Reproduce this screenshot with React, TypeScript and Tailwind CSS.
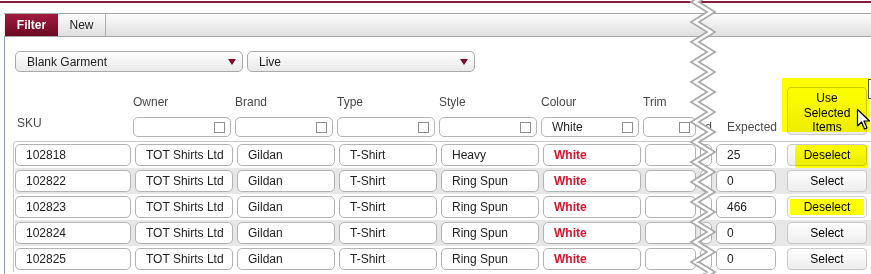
import React from "react"

const rows = [
  { sku: "102818", style: "Heavy", expected: "25", mode: "marked" },
  { sku: "102822", style: "Ring Spun", expected: "0", mode: "none" },
  { sku: "102823", style: "Ring Spun", expected: "466", mode: "filled" },
  { sku: "102824", style: "Ring Spun", expected: "0", mode: "none" },
  { sku: "102825", style: "Ring Spun", expected: "0", mode: "none" },
]

function Arrow() {
  return (
    <svg width="8" height="6" viewBox="0 0 8 6" className="shrink-0">
      <polygon points="0,0 8,0 4,6" fill="#7a0d28" />
    </svg>
  )
}

function FakeSelect({ label }: { label: string }) {
  return (
    <div className="w-[228px] h-[21px] flex items-center justify-between pl-[11px] pr-[6px] border border-[#a9a9a9] rounded-[5px] bg-gradient-to-b from-white to-[#e9e9e9] text-[#222]">
      <span>{label}</span>
      <Arrow />
    </div>
  )
}

function FilterBox({ label, value, width }: { label: string; value?: string; width: string }) {
  return (
    <div className={"flex flex-col shrink-0 " + width}>
      <div className="leading-[16px] mb-[7px] text-[#4a4a4a] whitespace-nowrap">{label}</div>
      <div className="h-[20px] flex items-center justify-between pl-[10px] pr-[5px] border border-[#b5b5b5] rounded-[5px] bg-white">
        <span className="text-[#222]">{value}</span>
        <span className="w-[11px] h-[11px] border border-[#8f8f8f] bg-white shrink-0" />
      </div>
    </div>
  )
}

function Cell({ children, width, red }: { children?: React.ReactNode; width: string; red?: boolean }) {
  return (
    <div
      className={
        "h-[22px] shrink-0 flex items-center pl-[10px] border border-[#b3b3b3] rounded-[5px] bg-white whitespace-nowrap overflow-hidden " +
        width +
        (red ? " text-[#d7142c] font-bold" : " text-[#222]")
      }
    >
      {children}
    </div>
  )
}

function RowButton({ mode }: { mode: string }) {
  if (mode === "filled") {
    return (
      <div className="w-[80px] h-[22px] shrink-0 p-[2px] border border-[#cfcfcf] rounded-[4px] bg-white">
        <div className="h-full flex items-center justify-center bg-[#ffff00] text-black">Deselect</div>
      </div>
    )
  }
  return (
    <div className="relative w-[80px] h-[22px] shrink-0 flex items-center justify-center border border-[#c9c9c9] rounded-[4px] bg-gradient-to-b from-white to-[#ededed] text-black">
      {mode === "marked" ? "Deselect" : "Select"}
      {mode === "marked" && (
        <div className="absolute left-[7px] top-[0px] w-[73px] h-[23px] rounded-[2px] bg-[#ffff00] mix-blend-multiply" />
      )}
    </div>
  )
}

function Zigzag() {
  const pts: string[] = []
  for (let k = -1; k < 15; k++) {
    pts.push(`9,${2 + 20 * k}`)
    pts.push(`25,${12 + 20 * k}`)
  }
  const p = pts.join(" ")
  return (
    <svg className="absolute left-[686px] top-0" width="34" height="274" viewBox="0 0 34 274">
      <polyline points={p} fill="none" stroke="#a9a9a9" strokeWidth="6" strokeLinejoin="miter" />
      <polyline points={p} fill="none" stroke="#ffffff" strokeWidth="2.6" strokeLinejoin="miter" />
    </svg>
  )
}

export default function App() {
  return (
    <div className="relative w-[871px] h-[274px] overflow-hidden bg-white font-['Liberation_Sans',Arial,sans-serif] text-[12px]">
      <div className="mt-[1px] h-[2px] bg-[#8a1c3e]" />

      <div className="mt-[10px] ml-[4px] h-[24px] flex border-y border-[#a8a8a8] bg-gradient-to-b from-[#fcfcfc] to-[#dfdfdf]">
        <div className="w-[53px] ml-[1px] flex items-center justify-center bg-gradient-to-b from-[#a21b3f] to-[#6a0a22] text-white font-bold">
          Filter
        </div>
        <div className="w-[48px] flex items-center justify-center border-r border-[#b0b0b0] text-[#222]">New</div>
      </div>

      <div className="ml-[4px] h-[237px] border-l border-[#8e9aa6] pl-[10px] pt-[14px]">
        <div className="flex gap-[4px]">
          <FakeSelect label="Blank Garment" />
          <FakeSelect label="Live" />
        </div>

        <div className="mt-[15px] flex items-end gap-[4px]">
          <div className="w-[114px] shrink-0 pl-[2px] pb-[6px] leading-[16px] text-[#4a4a4a]">SKU</div>
          <FilterBox label="Owner" width="w-[98px]" />
          <FilterBox label="Brand" width="w-[98px]" />
          <FilterBox label="Type" width="w-[98px]" />
          <FilterBox label="Style" width="w-[98px]" />
          <FilterBox label="Colour" value="White" width="w-[98px]" />
          <FilterBox label="Trim" width="w-[53px]" />
          <div className="w-[12px] shrink-0 pb-[2px] leading-[16px] text-right text-[#4a4a4a]">d</div>
          <div className="w-[60px] shrink-0 pl-[11px] pb-[2px] leading-[16px] text-[#4a4a4a]">Expected</div>
          <div className="relative ml-[7px] mb-[2px] w-[80px] h-[48px] shrink-0 pt-[3px] border border-[#c9c9c9] rounded-[4px] bg-gradient-to-b from-white to-[#ececec] text-center leading-[14.5px] text-black">
            Use
            <br />
            Selected
            <br />
            Items
            <div className="absolute -left-[6px] -top-[10px] w-[87px] h-[54px] bg-[#ffff00] mix-blend-multiply" />
          </div>
        </div>

        <div className="mt-[4px] -ml-[2px] -mr-[12px] border-t border-l border-[#c8c8c8] rounded-tl-[4px] pl-[1px]">
          {rows.map((r, i) => (
            <div
              key={r.sku}
              className={"flex items-center gap-[4px] py-[2px] " + (i % 2 === 1 ? "bg-[#e7e7e7]" : "bg-white")}
            >
              <Cell width="w-[116px]">{r.sku}</Cell>
              <Cell width="w-[98px]">TOT Shirts Ltd</Cell>
              <Cell width="w-[98px]">Gildan</Cell>
              <Cell width="w-[98px]">T-Shirt</Cell>
              <Cell width="w-[98px]">{r.style}</Cell>
              <Cell width="w-[98px]" red>
                White
              </Cell>
              <Cell width="w-[51px]" />
              <div className="w-[12px] h-[22px] shrink-0 border border-[#b3b3b3] rounded-[5px] bg-white" />
              <Cell width="w-[60px]">{r.expected}</Cell>
              <div className="ml-[7px]">
                <RowButton mode={r.mode} />
              </div>
            </div>
          ))}
        </div>
      </div>

      <Zigzag />

      <div className="absolute left-[868px] top-[79px] w-[10px] h-[20px] border border-[#555]" />

      <svg className="absolute left-[856px] top-[108px]" width="16" height="24" viewBox="0 0 16 24">
        <path d="M1.5 1.5 L1.5 18 L5.5 14 L8.5 21 L11 20 L8 13 L13.5 13 Z" fill="#ffffff" stroke="#000000" strokeWidth="1.2" strokeLinejoin="round" />
      </svg>
    </div>
  )
}
